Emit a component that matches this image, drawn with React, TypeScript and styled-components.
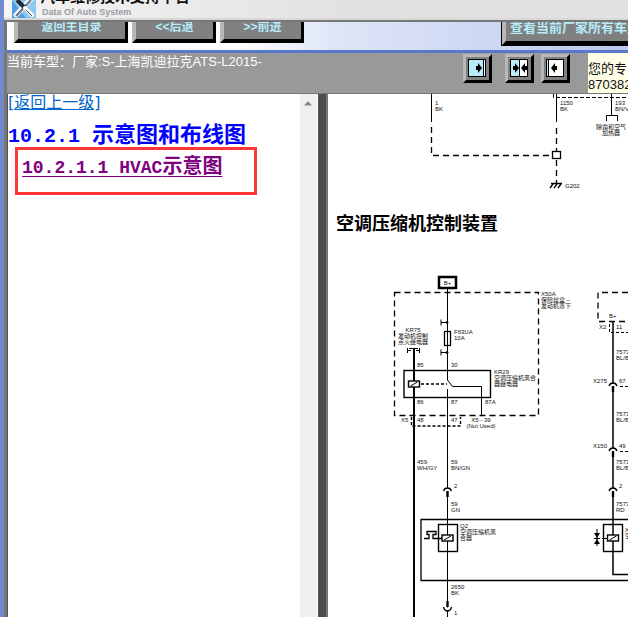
import React from "react";
import styled, { createGlobalStyle } from "styled-components";

const GlobalStyle = createGlobalStyle`
  * { box-sizing: border-box; }
  html, body, #root { height: 100%; }
  body {
    margin: 0;
    overflow: hidden;
    font-family: "Liberation Sans", "Noto Sans CJK SC", sans-serif;
  }
`;

const Window = styled.div`
  display: flex;
  flex-direction: column;
  height: 100vh;
  border-left: 4px solid #6f8bcb;
  background: #d8d8d8;
`;

const TitleBar = styled.header`
  display: flex;
  align-items: flex-end;
  gap: 4px;
  height: 18px;
  flex: none;
  padding: 0 8px;
  overflow: hidden;
  background: linear-gradient(90deg, #f4f4f4, #e0e0e0 60%, #e2e2e2);
`;

const Logo = styled.svg`
  flex: none;
  width: 24px;
  height: 28px;
`;

const Brand = styled.div`
  display: flex;
  flex-direction: column;
  color: #111;
`;

const BrandName = styled.h1`
  margin: 0;
  font-size: 15px;
  line-height: 20px;
  font-weight: 700;
`;

const BrandSub = styled.span`
  padding-left: 2px;
  font-size: 9px;
  line-height: 11px;
  font-weight: 700;
  color: #9b9ba3;
`;

const Body = styled.div`
  display: flex;
  flex-direction: column;
  flex: 1;
  min-height: 0;
  margin-top: 2px;
  border-top: 2px solid #777;
  border-left: 3px solid #777;
`;

const Nav = styled.nav`
  display: flex;
  align-items: flex-end;
  gap: 4px;
  height: 31px;
  flex: none;
  padding: 0 0 7px 7px;
  overflow: hidden;
  border-bottom: 3px solid #5878cc;
  background: linear-gradient(90deg, #fff 0%, #fdfdff 38%, #dfe6f8 52%, #ccd6f3 80%, #b9c8ee 100%);
`;

const NavButton = styled.button<{ $wide?: boolean }>`
  flex: none;
  width: ${(p) => (p.$wide ? 114 : 84)}px;
  height: 40px;
  padding: 8px 0 0;
  border: solid;
  border-width: 4px 3px 4px 4px;
  border-color: #b8b8b8 #000 #000 #b8b8b8;
  background: #808080;
  color: #b4ecfa;
  font: 700 12px/14px "Liberation Sans", "Noto Sans CJK SC", sans-serif;
  white-space: nowrap;
`;

const CatalogButton = styled(NavButton)`
  width: 160px;
  margin-left: auto;
  margin-right: -34px;
  margin-bottom: -2px;
  padding: 5px 0 0 4px;
  outline: 1px solid #000;
  font-size: 13px;
  text-align: left;
`;

const InfoBar = styled.section`
  display: flex;
  height: 40px;
  flex: none;
  background: #999;
  color: #fff;
`;

const CarModel = styled.p`
  flex: 1;
  margin: 0;
  font-size: 13px;
  line-height: 18px;
  white-space: nowrap;
`;

const PaneControls = styled.div`
  display: flex;
  gap: 7px;
  flex: none;
  padding: 1px 18px 0 0;
`;

const PaneButton = styled.button<{ $apart?: boolean }>`
  width: 29px;
  height: 29px;
  margin-right: ${(p) => (p.$apart ? 6 : 0)}px;
  padding: 2px 3px 3px 2px;
  border: 3px solid;
  border-color: #b8b8b8 #000 #000 #b8b8b8;
  background: #808080;
  svg { display: block; }
`;

const Notice = styled.aside`
  width: 40px;
  flex: none;
  padding-top: 8px;
  overflow: hidden;
  background: #ffffe8;
  color: #111;
  font-size: 13px;
  line-height: 16px;
  white-space: nowrap;
`;

const Panes = styled.main`
  display: flex;
  flex: 1;
  min-height: 0;
  border-top: 1px solid #777;
`;

const ContentsPane = styled.section`
  display: flex;
  flex: none;
  width: 311px;
  border-left: 1px solid #555;
  background: #fff;
`;

const Contents = styled.div`
  flex: 1;
  min-width: 0;
`;

const BackLink = styled.a`
  display: block;
  width: max-content;
  font: 16px/18px "DejaVu Sans", "Noto Sans CJK SC", sans-serif;
  color: #0066cc;
  text-decoration: underline;
`;

const Latin = styled.span<{ $size: number }>`
  font-family: "Liberation Mono", monospace;
  font-size: ${(p) => p.$size}px;
  line-height: 1;
`;

const ChapterTitle = styled.h2`
  margin: 6px 0 0;
  font: 700 22px/28px "Noto Sans CJK SC", sans-serif;
  color: #0000ff;
  white-space: nowrap;
`;

const Highlight = styled.div`
  width: 242px;
  height: 48px;
  margin: 0 0 0 7px;
  padding: 2px 4px;
  border: 3px solid #fb3737;
`;

const SectionLink = styled.a`
  font: 700 20px/26px "Noto Sans CJK SC", sans-serif;
  color: #800080;
  text-decoration: underline;
  text-decoration-thickness: 1px;
  text-underline-offset: 3px;
  white-space: nowrap;
`;

const ScrollTrack = styled.div`
  flex: none;
  width: 18px;
  padding: 7px 4px;
  border-right: 1px solid #fff;
  background: #f0f0f0;
  svg { display: block; }
`;

const Divider = styled.div`
  flex: none;
  width: 10px;
  background: #4d4d4d;
  border-right: 2px solid #777;
`;

const DocumentPane = styled.section`
  flex: 1;
  min-width: 0;
  overflow: hidden;
  background: #fff;
`;

const Drawing = styled.svg`
  display: block;
  font-family: "Liberation Sans", "Noto Sans CJK SC", sans-serif;
  font-size: 6px;
  fill: none;
  stroke: #000;
  text { fill: #111; stroke: none; white-space: pre; }
  .solid { fill: #000; }
`;

const DiagramTitle = styled.h2`
  margin: 0;
  padding-left: 8px;
  font: 700 18px/36px "Noto Sans CJK SC", sans-serif;
  color: #000;
  white-space: nowrap;
`;

type LabelProps = { x: number; y: number; lines: string[]; center?: boolean };

function Label({ x, y, lines, center }: LabelProps) {
  return (
    <text x={x} y={y} textAnchor={center ? "middle" : "start"}>
      {lines.map((line, i) => (
        <tspan key={i} x={x} dy={i ? 6 : 0}>{line}</tspan>
      ))}
    </text>
  );
}

function Coil({ x, y }: { x: number; y: number }) {
  return (
    <g>
      <rect x={x} y={y} width="11" height="6" fill="#fff" strokeWidth="1.4" />
      <path d={`M${x + 2} ${y + 5}L${x + 9} ${y + 1}`} />
    </g>
  );
}

function Socket({ x, y }: { x: number; y: number }) {
  return (
    <g>
      <path d={`M${x - 3} ${y - 2}h6v5h-6z`} fill="#fff" stroke="none" />
      <path d={`M${x - 4} ${y + 1}q1 -3 4 -3t4 3`} strokeWidth="1.3" />
      <path d={`M${x} ${y + 1}v6`} strokeWidth="2.4" />
    </g>
  );
}

function PaneIcon({ kind }: { kind: "right" | "split" | "left" }) {
  const edge = kind === "right" ? 15 : kind === "split" ? 9 : 2;
  const rightArrow = (x: number) => `M${x} 7h2v-3l4 5l-4 5v-3h-2z`;
  const leftArrow = (x: number) => `M${x} 7h-2v-3l-4 5l4 5v-3h2z`;
  return (
    <svg width="18" height="18" viewBox="0 0 18 18">
      <rect x="0.5" y="0.5" width="17" height="17" fill="#fff" stroke="#000" />
      <rect x="1" y="1" width={edge} height="16" fill="#b8ecfc" />
      <path d={`M${edge + 0.5} 1v16`} stroke="#000" />
      {kind === "right" && <path d={rightArrow(8)} />}
      {kind === "split" && <path d={rightArrow(3) + leftArrow(17)} />}
      {kind === "left" && <path d={leftArrow(11)} />}
    </svg>
  );
}

function GroundDrawing() {
  return (
    <Drawing width="400" height="110" viewBox="328 94 400 110" role="img" aria-label="G202">
      <path d="M431.5 94v28M556.5 94v28M611.5 94v21M606.5 121v-5.500h11v5.500" />
      <path d="M431.500 127v28.500H553M556.500 128v24M556.500 160v24" strokeWidth="1.3" strokeDasharray="6 4" />
      <path d="M553.500 94v3.500H728" strokeDasharray="4 2" />
      <rect x="552.500" y="151.500" width="8" height="7" fill="#fff" strokeWidth="1.300" />
      <path d="M551 183.500h11M553 184l-3 4M557 184l-3 4M561 184l-3 4" strokeWidth="1.300" />
      <Label x={435} y={105} lines={["1", "BK"]} />
      <Label x={560} y={105} lines={["1150", "BK"]} />
      <Label x={615} y={105} lines={["193", "BN/VT"]} />
      <Label x={611} y={129} lines={["除霜和空气", "加热器"]} center />
      <Label x={565} y={188} lines={["G202"]} />
    </Drawing>
  );
}

function CompressorDrawing() {
  return (
    <Drawing width="400" height="400" viewBox="328 240 400 400" role="img" aria-label="空调压缩机控制装置">
      <rect x="439" y="277" width="17" height="11" strokeWidth="2.500" />
      <Label x={447.5} y={285} lines={["B+"]} center />
      <rect x="394.500" y="292.500" width="144" height="123" strokeWidth="1.300" strokeDasharray="6 4" />
      <path d="M447.500 289v91l5 6.500h29v29M447.500 389v251" />
      <path d="M441 319.500v6M441 322.500h6M441 349.500v6M441 352.500h6" />
      <circle className="solid" cx="447" cy="322.500" r="1" />
      <circle className="solid" cx="447" cy="352.500" r="1" />
      <rect x="444.500" y="331.500" width="6" height="14" strokeWidth="1.300" />
      <Label x={454} y={334} lines={["F63UA", "10A"]} />
      <Label x={413} y={332} lines={["KR75", "发动机控制", "点火继电器"]} center />
      <path d="M407.500 348v5M419.500 348v5M408 350.500h3M416 350.500h3M409 348.500h9" />
      <path d="M414 349v291" strokeWidth="2" />
      <rect x="404" y="370.500" width="86.500" height="27" strokeWidth="1.400" />
      <Coil x={408.5} y={381} />
      <path d="M421 384h26" strokeWidth="1.600" strokeDasharray="3 2" />
      <Label x={417} y={367} lines={["85"]} />
      <Label x={451} y={367} lines={["30"]} />
      <Label x={417} y={404} lines={["86"]} />
      <Label x={451} y={404} lines={["87"]} />
      <Label x={485} y={404} lines={["87A"]} />
      <Label x={494} y={374} lines={["KR29", "空调压缩机离合", "器继电器"]} />
      <Label x={541} y={296} lines={["X50A", "保险丝盒 –", "发动机罩下"]} />
      <Label x={401} y={422} lines={["X5"]} />
      <Label x={417} y={422} lines={["48"]} />
      <Label x={451} y={422} lines={["47"]} />
      <Label x={481} y={422} lines={["X5 - 39", "(Not Used)"]} center />
      <path d="M411.500 417v9H460.500v-9" strokeWidth="1.400" strokeDasharray="3 2" />

      <Label x={417} y={464} lines={["459", "WH/GY"]} />
      <Label x={451} y={464} lines={["59", "BN/GN"]} />
      <Socket x={447.5} y={490} />
      <Label x={454} y={488} lines={["2"]} />
      <Label x={451} y={506} lines={["59", "GN"]} />
      <path d="M728 519.500H421v61H728" strokeWidth="1.300" />
      <rect x="438.500" y="524.500" width="19" height="27" strokeWidth="1.400" />
      <Coil x={442} y={535} />
      <path d="M424 538.500h5v-4h-2v-3h9v3h-3v4h9" strokeWidth="1.300" />
      <Label x={460} y={528} lines={["Q2", "空调压缩机离", "合器"]} />
      <Label x={451} y={589} lines={["2650", "BK"]} />
      <path d="M447.500 601v6" strokeWidth="2.400" />
      <path d="M444 607.500h7v3h-7z" fill="#fff" stroke="none" />
      <path d="M443.500 607q1 4 4 4t4 -4" strokeWidth="1.300" />
      <Label x={454} y={615} lines={["1"]} />

      <path d="M728 292.500H598v29H728" strokeWidth="1.300" strokeDasharray="6 4" />
      <Label x={609} y={318} lines={["B+"]} />
      <Label x={599} y={329} lines={["X2"]} />
      <Label x={616} y={329} lines={["11"]} />
      <path d="M609.500 324v8.500H728" strokeDasharray="3 2" />
      <path d="M613 322v252.500H728" strokeWidth="1.500" />
      <Label x={616} y={354} lines={["7573", "BL/BK"]} />
      <Socket x={613} y={385} />
      <Label x={593} y={383} lines={["X275"]} />
      <Label x={619} y={383} lines={["67"]} />
      <path d="M620 386.500H728M620 451.500H728" strokeDasharray="3 2" />
      <Label x={616} y={416} lines={["7573", "BL/BK"]} />
      <Socket x={613} y={450} />
      <Label x={593} y={448} lines={["X150"]} />
      <Label x={619} y={448} lines={["49"]} />
      <Label x={616} y={464} lines={["7573", "BL/BK"]} />
      <Socket x={613} y={490} />
      <Label x={619} y={488} lines={["2"]} />
      <Label x={616} y={506} lines={["7573", "RD"]} />
      <rect x="603.500" y="524.500" width="19" height="27" strokeWidth="1.400" />
      <Coil x={607.5} y={535} />
      <path d="M597 529v17M594 538.500h6M602 538.500h5" />
      <path className="solid" stroke="none" d="M594 533h6l-3 5zM594 544h6l-3 -5z" />
      <Label x={625} y={532} lines={["X", "空调"]} />
    </Drawing>
  );
}

export default function App() {
  return (
    <Window>
      <GlobalStyle />
      <TitleBar>
        <Logo viewBox="0 0 24 28">
          <rect width="24" height="28" fill="#8fc8ee" />
          <path d="M0 10L14 28H0z" fill="#4e9fdf" />
          <path d="M4 25L19 9" stroke="#f8fbff" strokeWidth="5" strokeLinecap="round" />
          <path d="M4 26L19 10" stroke="#687684" strokeWidth="2" />
          <path d="M5 10l8 8" stroke="#222b35" strokeWidth="4" />
          <path d="M13 18l7 7" stroke="#fff" strokeWidth="4" strokeLinecap="round" />
          <path d="M14 20l6 6" stroke="#43505c" />
        </Logo>
        <Brand>
          <BrandName>汽车维修技术支持平台</BrandName>
          <BrandSub>Data Of Auto System</BrandSub>
        </Brand>
      </TitleBar>
      <Body>
        <Nav>
          <NavButton type="button" $wide>返回主目录</NavButton>
          <NavButton type="button">&lt;&lt;后退</NavButton>
          <NavButton type="button">&gt;&gt;前进</NavButton>
          <CatalogButton type="button">查看当前厂家所有车型</CatalogButton>
        </Nav>
        <InfoBar>
          <CarModel>当前车型：厂家:S-上海凯迪拉克ATS-L2015-</CarModel>
          <PaneControls>
            <PaneButton type="button" $apart aria-label="展开左栏"><PaneIcon kind="right" /></PaneButton>
            <PaneButton type="button" aria-label="左右分栏"><PaneIcon kind="split" /></PaneButton>
            <PaneButton type="button" aria-label="展开右栏"><PaneIcon kind="left" /></PaneButton>
          </PaneControls>
          <Notice>您的专<br />870382</Notice>
        </InfoBar>
        <Panes>
          <ContentsPane>
            <Contents>
              <BackLink href="#up">[返回上一级]</BackLink>
              <ChapterTitle><Latin $size={20}>10.2.1 </Latin>示意图和布线图</ChapterTitle>
              <Highlight>
                <SectionLink href="#hvac"><Latin $size={18}>10.2.1.1 HVAC</Latin>示意图</SectionLink>
              </Highlight>
            </Contents>
            <ScrollTrack>
              <svg width="8" height="5" viewBox="0 0 8 5"><path d="M0 4.500L4 0l4 4.500z" fill="#888" /></svg>
            </ScrollTrack>
          </ContentsPane>
          <Divider />
          <DocumentPane>
            <GroundDrawing />
            <DiagramTitle>空调压缩机控制装置</DiagramTitle>
            <CompressorDrawing />
          </DocumentPane>
        </Panes>
      </Body>
    </Window>
  );
}
